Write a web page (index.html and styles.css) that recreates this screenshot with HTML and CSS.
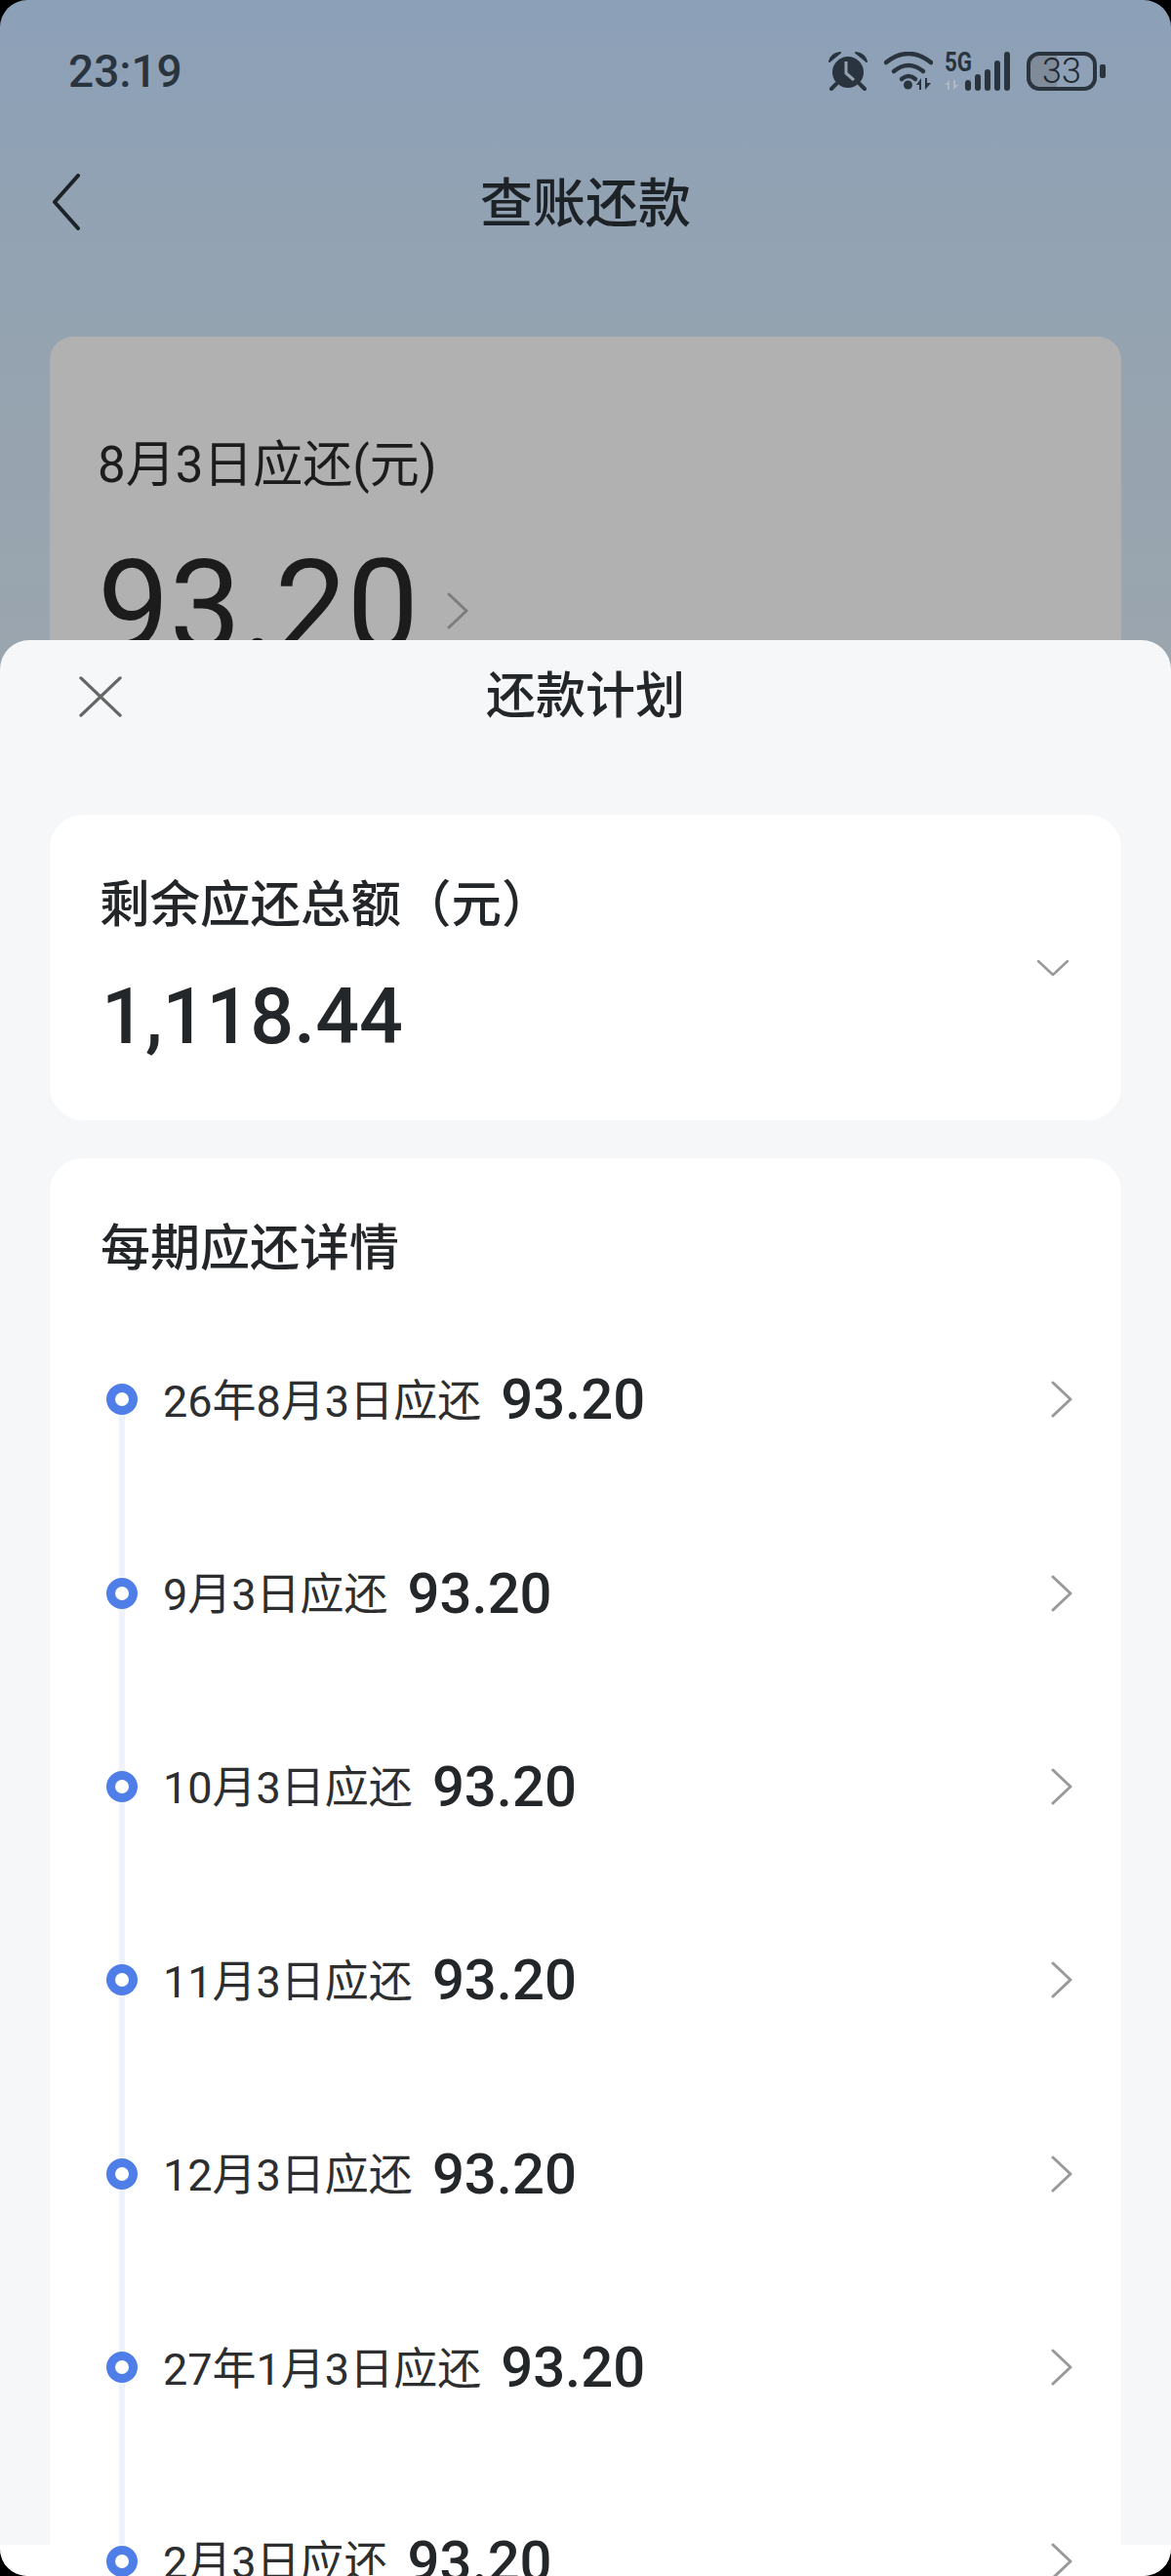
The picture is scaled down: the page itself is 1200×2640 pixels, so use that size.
FILE: index.html
```html
<!DOCTYPE html>
<html lang="zh-CN">
<head>
  <meta charset="UTF-8">
  <title>查账还款</title>
  <link rel="stylesheet" href="styles.css">
</head>
<body>
  <svg class="sprites" width="0" height="0">
    <symbol id="chevron-right" viewBox="0 0 24 38">
      <path d="M3 2 L21 19 L3 36" fill="none" stroke="currentColor" stroke-width="3" stroke-linecap="round" stroke-linejoin="round"/>
    </symbol>
  </svg>

  <div class="screen">
    <header class="status-bar">
      <span class="time">23:19</span>
      <div class="status-icons">
        <svg class="icon-alarm" width="40" height="40" viewBox="0 0 40 40">
          <circle cx="20" cy="21" r="16" fill="#29343e"/>
          <path d="M18 10 V22 L26 29" fill="none" stroke="#95a3b2" stroke-width="3"/>
          <path d="M1 10 Q3 2 12 1 Z M39 10 Q37 2 28 1 Z" fill="#29343e" stroke="#29343e" stroke-width="2" stroke-linejoin="round"/>
          <path d="M8 33 L3 38 M32 33 L37 38" stroke="#29343e" stroke-width="4" stroke-linecap="round"/>
        </svg>
        <svg class="icon-wifi" width="50" height="40" viewBox="0 0 50 40">
          <g fill="none" stroke="#29343e" stroke-width="4.5" stroke-linecap="round">
            <path d="M2 11 Q25 -7 48 11"/>
            <path d="M10 20 Q25 8 40 20"/>
            <path d="M18 28 Q25 22 32 28"/>
          </g>
          <circle cx="24.5" cy="34" r="4.5" fill="#29343e"/>
          <path d="M38 27 V39 H36 V34 H33 Z M42 39 V27 H44 V32 H48 Z" fill="#29343e"/>
        </svg>
        <svg class="icon-net" width="67" height="40" viewBox="0 0 67 40">
          <text class="net-label" x="0" y="20" textLength="28" lengthAdjust="spacingAndGlyphs">5G</text>
          <path d="M5 29 V39 H3 V34 H0 Z M9 39 V29 H11 V34 H15 Z" fill="#aeb8c3"/>
          <g stroke="#29343e" stroke-width="6" stroke-linecap="round">
            <path d="M24 32 V37"/>
            <path d="M34 26 V37"/>
            <path d="M44 21 V37"/>
            <path d="M54 12 V37"/>
            <path d="M64 3 V37"/>
          </g>
        </svg>
        <svg class="icon-battery" width="81" height="40" viewBox="0 0 81 40">
          <path d="M12 4 H31 V36 H12 Q4 36 4 28 V12 Q4 4 12 4 Z" fill="#7f8b98"/>
          <rect x="2" y="2" width="68" height="36" rx="11" fill="none" stroke="#29343e" stroke-width="4"/>
          <rect x="75" y="13" width="6" height="14" rx="2" fill="#29343e"/>
          <text class="battery-label" x="36" y="32" text-anchor="middle">33</text>
        </svg>
      </div>
    </header>

    <nav class="nav-bar">
      <svg class="icon-back" width="30" height="58" viewBox="0 0 30 58">
        <path d="M27 2 L3 29 L27 56" fill="none" stroke="#1d2226" stroke-width="4" stroke-linecap="round" stroke-linejoin="round"/>
      </svg>
      <h1 class="nav-title">查账还款</h1>
    </nav>

    <section class="bill-card">
      <p class="bill-label">8月3日应还(元)</p>
      <div class="bill-amount">
        <span class="bill-value">93.20</span>
        <svg class="bill-chevron" width="24" height="38"><use href="#chevron-right"/></svg>
      </div>
    </section>

    <div class="sheet">
      <div class="sheet-header">
        <svg class="icon-close" width="44" height="42" viewBox="0 0 46 44">
          <path d="M2 2 L44 42 M44 2 L2 42" fill="none" stroke="#666" stroke-width="3.5" stroke-linecap="round"/>
        </svg>
        <h2 class="sheet-title">还款计划</h2>
      </div>

      <section class="card total-card">
        <div>
          <p class="total-label">剩余应还总额（元）</p>
          <p class="total-value">1,118.44</p>
        </div>
        <svg class="icon-down" width="34" height="18" viewBox="0 0 34 18">
          <path d="M2 2 L17 16 L32 2" fill="none" stroke="#999" stroke-width="2.5" stroke-linecap="round" stroke-linejoin="round"/>
        </svg>
      </section>

      <section class="card detail-card">
        <h3 class="detail-title">每期应还详情</h3>
        <ul class="plan-list">
          <li class="plan-row">
            <span class="dot"></span>
            <span class="plan-date">26年8月3日应还</span>
            <span class="plan-amount">93.20</span>
            <svg class="row-chevron" width="24" height="38"><use href="#chevron-right"/></svg>
          </li>
          <li class="plan-row">
            <span class="dot"></span>
            <span class="plan-date">9月3日应还</span>
            <span class="plan-amount">93.20</span>
            <svg class="row-chevron" width="24" height="38"><use href="#chevron-right"/></svg>
          </li>
          <li class="plan-row">
            <span class="dot"></span>
            <span class="plan-date">10月3日应还</span>
            <span class="plan-amount">93.20</span>
            <svg class="row-chevron" width="24" height="38"><use href="#chevron-right"/></svg>
          </li>
          <li class="plan-row">
            <span class="dot"></span>
            <span class="plan-date">11月3日应还</span>
            <span class="plan-amount">93.20</span>
            <svg class="row-chevron" width="24" height="38"><use href="#chevron-right"/></svg>
          </li>
          <li class="plan-row">
            <span class="dot"></span>
            <span class="plan-date">12月3日应还</span>
            <span class="plan-amount">93.20</span>
            <svg class="row-chevron" width="24" height="38"><use href="#chevron-right"/></svg>
          </li>
          <li class="plan-row">
            <span class="dot"></span>
            <span class="plan-date">27年1月3日应还</span>
            <span class="plan-amount">93.20</span>
            <svg class="row-chevron" width="24" height="38"><use href="#chevron-right"/></svg>
          </li>
          <li class="plan-row">
            <span class="dot"></span>
            <span class="plan-date">2月3日应还</span>
            <span class="plan-amount">93.20</span>
            <svg class="row-chevron" width="24" height="38"><use href="#chevron-right"/></svg>
          </li>
        </ul>
      </section>
    </div>
  </div>
</body>
</html>
```

FILE: styles.css
```css
* {
  box-sizing: border-box;
}

html, body {
  margin: 0;
  height: 2640px;
  overflow: hidden;
  background-color: #000;
}

body {
  font-family: Roboto, "Noto Sans CJK SC", sans-serif;
  color: #24272a;
}

h1, h2, h3, p, ul {
  margin: 0;
  padding: 0;
}

.sprites {
  position: absolute;
}

.screen {
  position: relative;
  width: 1200px;
  height: 2640px;
  overflow: hidden;
  border-radius: 28px;
  background: linear-gradient(#8ca0b8 0, #94a3b1 300px, #9aa5ae 660px);
}

/* status bar */
.status-bar {
  display: flex;
  align-items: center;
  justify-content: space-between;
  height: 146px;
  padding: 0 67px 0 70px;
}

.time {
  font-size: 46px;
  font-weight: 500;
  color: #29343e;
}

.status-icons {
  display: flex;
  align-items: center;
  gap: 12px;
}

.status-icons svg {
  display: block;
}

.icon-wifi {
  margin-left: 5px;
}

.icon-battery {
  margin-left: 5px;
}

.icon-net {
  overflow: visible;
}

.net-label {
  font-family: Roboto, sans-serif;
  font-size: 28px;
  font-weight: 700;
  fill: #29343e;
}

.battery-label {
  font-family: Roboto, sans-serif;
  font-size: 36px;
  font-weight: 300;
  fill: #1f2830;
}

/* page behind the sheet */
.nav-bar {
  display: grid;
  grid-template-columns: 1fr auto 1fr;
  align-items: center;
  height: 122px;
  padding: 0 53px;
}

.nav-title {
  padding-bottom: 6px;
  font-size: 54px;
  font-weight: 500;
  color: #1d2226;
}

.bill-card {
  height: 600px;
  margin: 77px 51px 0;
  padding: 102px 49px 0;
  border-radius: 24px;
  background-color: #b1b1b1;
  color: #1c1c1c;
}

.bill-label {
  font-size: 51px;
  line-height: 60px;
}

.bill-amount {
  display: flex;
  align-items: center;
  gap: 28px;
  margin-top: 50px;
}

.bill-value {
  font-size: 131px;
  line-height: 130px;
}

.bill-chevron {
  margin-top: 8px;
  color: #7d7d7d;
}

/* bottom sheet */
.sheet {
  position: absolute;
  top: 656px;
  left: 0;
  right: 0;
  bottom: 0;
  padding: 0 51px;
  border-radius: 30px 30px 0 0;
  background: linear-gradient(#f6f7f8 1952px, #fff 1952px);
}

.sheet-header {
  position: relative;
  display: flex;
  align-items: center;
  justify-content: center;
  height: 110px;
  margin-bottom: 69px;
}

.icon-close {
  position: absolute;
  left: 30px;
  top: 37px;
}

.sheet-title {
  padding-bottom: 5px;
  font-size: 51px;
  font-weight: 500;
}

.card {
  border-radius: 34px;
  background-color: #fff;
}

.total-card {
  display: flex;
  align-items: center;
  justify-content: space-between;
  height: 313px;
  padding: 0 53px 0 51px;
  margin-bottom: 39px;
}

.total-label {
  font-size: 51.5px;
  line-height: 64px;
  font-weight: 500;
}

.total-value {
  margin-top: 37px;
  margin-left: 2px;
  font-size: 79px;
  line-height: 90px;
  font-weight: 500;
}

.detail-card {
  height: 1600px;
  padding: 61px 49px 0 52px;
}

.detail-title {
  font-size: 51px;
  line-height: 64px;
  font-weight: 500;
}

.plan-list {
  list-style: none;
  margin-top: 23px;
}

.plan-row {
  display: flex;
  align-items: center;
  height: 198.4px;
}

.dot {
  position: relative;
  flex: none;
  width: 32px;
  height: 32px;
  margin-left: 6px;
  margin-right: 26px;
  border: 9px solid #4f7ee8;
  border-radius: 50%;
  background-color: #fff;
}

/* connector down to the next dot */
.dot::after {
  content: "";
  position: absolute;
  left: 4px;
  top: 23px;
  width: 6px;
  height: 166px;
  background-color: #edf2fb;
}

.plan-date {
  padding-bottom: 4px;
  font-size: 45px;
  color: #2c2e30;
}

.plan-amount {
  margin-left: 20px;
  font-size: 58px;
  font-weight: 500;
}

.row-chevron {
  margin-left: auto;
  color: #999;
}
```
